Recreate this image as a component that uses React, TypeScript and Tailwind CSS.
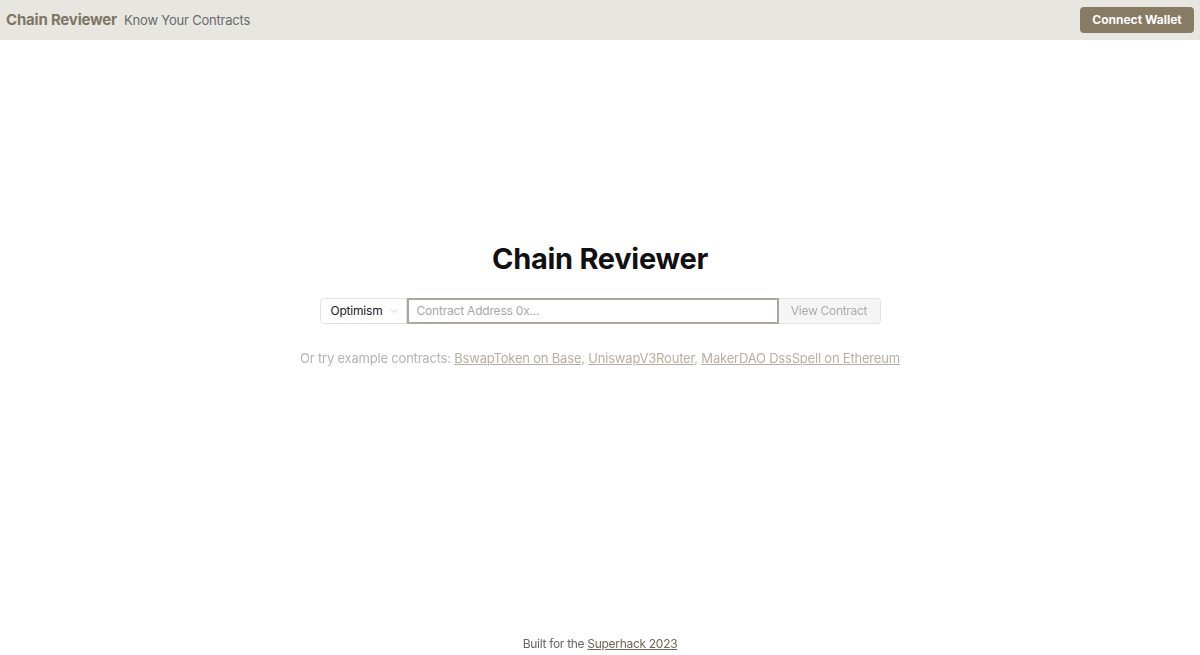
import { ChevronDown } from 'lucide-react'

const font = { fontFamily: 'Inter, "Liberation Sans", sans-serif' }

function Header() {
  return (
    <header className="h-10 bg-[#e8e6e1] flex items-center justify-between pl-1.5 pr-1.5">
      <div className="flex items-baseline gap-[7px]">
        <span className="text-[15px] tracking-[-0.2px] font-bold text-[#807560]">Chain Reviewer</span>
        <span className="text-[13px] tracking-[-0.2px] text-[#6a6a6a]">Know Your Contracts</span>
      </div>
      <button className="h-[26px] w-[114px] rounded bg-[#877b64] text-white text-[12px] font-bold">
        Connect Wallet
      </button>
    </header>
  )
}

export default function App() {
  const examples = ['BswapToken on Base', 'UniswapV3Router', 'MakerDAO DssSpell on Ethereum']
  return (
    <div className="min-h-screen flex flex-col bg-white" style={font}>
      <Header />
      <main className="flex-1 flex flex-col items-center pt-[201px]">
        <h1 className="text-[29px] tracking-[-0.3px] leading-9 font-bold text-[#111]">Chain Reviewer</h1>
        <div className="mt-[21px] flex h-[26px]">
          <div className="w-[87px] flex items-center gap-[5px] pl-2.5 border border-[#e3e3e3] rounded-l bg-white text-[12px] tracking-[-0.2px] text-[#222]">
            Optimism
            <ChevronDown className="w-3 h-3 text-[#b0b0b0]" strokeWidth={1.25} />
          </div>
          <input
            autoFocus
            className="w-[372px] border-2 border-[#aba79f] px-2 text-[12px] tracking-[-0.2px] text-[#333] placeholder:text-[#a8a8a8] outline-none"
            placeholder="Contract Address 0x..."
          />
          <button className="w-[102px] border border-l-0 border-[#e3e3e3] rounded-r bg-[#f5f5f5] text-[12px] tracking-[-0.3px] text-[#ababab]">
            View Contract
          </button>
        </div>
        <p className="mt-6 text-[13px] tracking-[-0.2px] leading-5 text-[#b4b4b4]">
          Or try example contracts:{' '}
          {examples.map((e, i) => (
            <span key={e}>
              <a href="#" className="underline text-[#b8b09f]">{e}</a>
              {i < examples.length - 1 && ', '}
            </span>
          ))}
        </p>
      </main>
      <footer className="pb-[1px] text-center text-[12px] tracking-[-0.3px] leading-5 text-[#666]">
        Built for the <a href="#" className="underline text-[#6e6656]">Superhack 2023</a>
      </footer>
    </div>
  )
}
